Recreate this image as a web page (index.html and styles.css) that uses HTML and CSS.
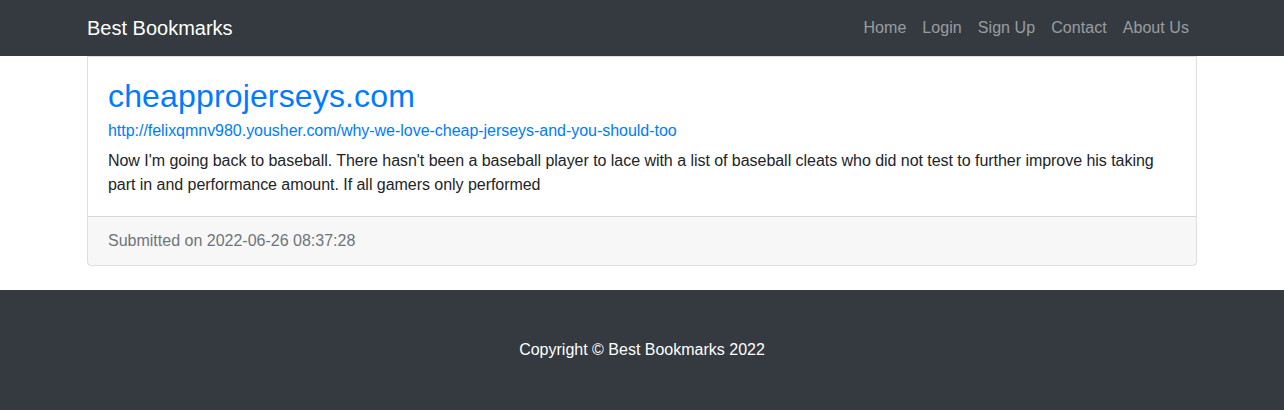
FILE: index.html
```html
<!DOCTYPE html>
<html lang="en">
<head>
    <meta charset="UTF-8">
    <title>Best Bookmarks</title>
    <meta name="viewport" content="width=device-width, initial-scale=1.0">
    <link rel="stylesheet" href="styles.css">
</head>
<body>
<nav class="navbar">
    <div class="container nav-inner">
        <a class="brand" href="#">Best Bookmarks</a>
        <ul class="nav-links">
            <li><a href="#">Home</a></li>
            <li><a href="#">Login</a></li>
            <li><a href="#">Sign Up</a></li>
            <li><a href="#">Contact</a></li>
            <li><a href="#">About Us</a></li>
        </ul>
    </div>
</nav>

<div class="container">
    <div class="card">
        <div class="card-body">
            <h2 class="card-title"><a href="#">cheapprojerseys.com</a></h2>
            <a class="card-url" href="#">http://felixqmnv980.yousher.com/why-we-love-cheap-jerseys-and-you-should-too</a>
            <p class="card-text">Now I'm going back to baseball. There hasn't been a baseball player to lace with a list of baseball cleats who did not test to further improve his taking part in and performance amount. If all gamers only performed</p>
        </div>
        <div class="card-footer">Submitted on 2022-06-26 08:37:28</div>
    </div>
</div>

<footer class="footer">
    <p>Copyright &copy; Best Bookmarks 2022</p>
</footer>
</body>
</html>
```

FILE: styles.css
```css
* { box-sizing: border-box; }
body { margin: 0; font-family: "Helvetica Neue", Arial, "Liberation Sans", sans-serif; font-size: 16px; line-height: 1.5; color: #212529; background: #fff; }
a { color: #007bff; text-decoration: none; }
.container { max-width: 1140px; margin: 0 auto; padding: 0 15px; }

.navbar { background-color: #343a40; padding: 8px 0; }
.nav-inner { display: flex; align-items: center; justify-content: space-between; }
.brand { color: #fff; font-size: 20px; line-height: 30px; padding: 5px 0; }
.nav-links { display: flex; list-style: none; margin: 0; padding: 0; }
.nav-links a { display: block; padding: 8px; color: rgba(255,255,255,.5); letter-spacing: 0.06px; }

.card { border: 1px solid rgba(0,0,0,.125); border-radius: 0 0 4px 4px; margin-bottom: 24px; }
.card-body { padding: 20px 20px 19px; }
.card-title { margin: 0 0 4px; font-size: 32px; font-weight: 500; line-height: 1.2; letter-spacing: 0.15px; }
.card-url { display: block; letter-spacing: -0.03px; }
.card-text { margin: 6px 0 0; letter-spacing: -0.04px; }
.card-footer { padding: 12px 20px; background-color: rgba(0,0,0,.03); border-top: 1px solid rgba(0,0,0,.125); color: #6c757d; }

.footer { background-color: #343a40; padding: 48px 0; text-align: center; }
.footer p { margin: 0; color: #fff; }
```
